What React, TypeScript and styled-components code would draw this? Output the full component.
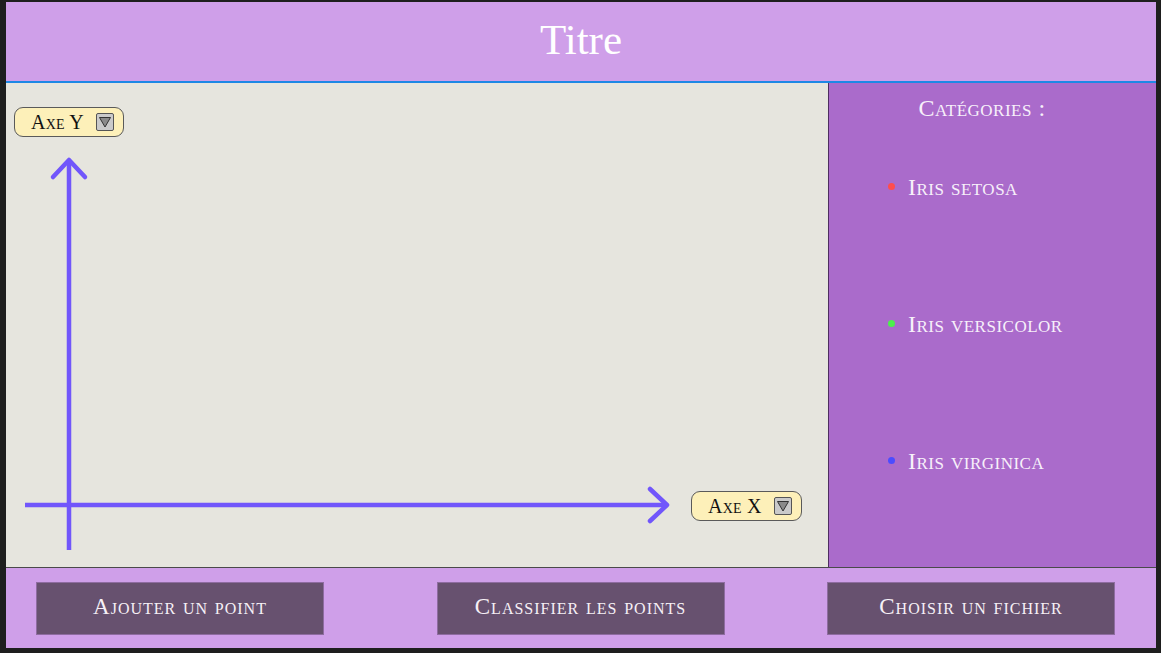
import React from "react";
import styled, { createGlobalStyle } from "styled-components";

const GlobalStyle = createGlobalStyle`
  html, body {
    margin: 0;
    padding: 0;
    background: #1e1e1e;
  }
  body {
    font-family: "Liberation Serif", "Times New Roman", serif;
  }
`;

const Frame = styled.div`
  margin: 2px 0 0 6px;
  width: 1150px;
  height: 646px;
  display: flex;
  flex-direction: column;
`;

const Header = styled.header`
  height: 79px;
  flex: 0 0 auto;
  background: #cf9fe9;
  border-bottom: 2px solid #1e88e5;
  display: flex;
  align-items: center;
  justify-content: center;
`;

const Title = styled.h1`
  margin: 0 0 4px 0;
  font-family: "Liberation Serif", serif;
  font-weight: 400;
  font-size: 43px;
  line-height: 1;
  color: #ffffff;
`;

const Main = styled.main`
  flex: 1 1 auto;
  display: flex;
  min-height: 0;
`;

const Graph = styled.section`
  flex: 1 1 auto;
  position: relative;
  background: #e6e5de;
`;

const Axes = styled.svg`
  position: absolute;
  left: 0;
  top: 0;
`;

const AxisSelect = styled.div<{ $x: number; $y: number; $w: number; $h: number }>`
  position: absolute;
  left: ${(p) => p.$x}px;
  top: ${(p) => p.$y}px;
  width: ${(p) => p.$w}px;
  height: ${(p) => p.$h}px;
  box-sizing: border-box;
  background: #fdf0b9;
  border: 1px solid #5a5a5a;
  border-radius: 9px;
  display: flex;
  align-items: center;
  padding-left: 16px;
  gap: 12px;
`;

const AxisLabel = styled.span`
  font-family: "Liberation Serif", serif;
  font-variant: small-caps;
  font-size: 20px;
  letter-spacing: 0.2px;
  color: #111;
  line-height: 1;
`;

const DropButton = styled.span`
  width: 18px;
  height: 18px;
  box-sizing: border-box;
  background: #cacaca;
  border: 1px solid #555;
  border-radius: 2px;
  display: flex;
  align-items: center;
  justify-content: center;
`;

const Sidebar = styled.aside`
  flex: 0 0 328px;
  box-sizing: border-box;
  background: #aa6bcb;
  border-left: 1px solid #4e2d60;
  display: flex;
  flex-direction: column;
`;

const SideHeading = styled.h2`
  margin: 10px 0 0 0;
  padding-right: 21px;
  height: 30px;
  line-height: 30px;
  text-align: center;
  font-family: "Liberation Serif", serif;
  font-weight: 400;
  font-variant: small-caps;
  font-size: 24px;
  letter-spacing: 0.5px;
  color: #f7f0fa;
`;

const CategoryList = styled.ul`
  list-style: none;
  margin: 49px 0 0 0;
  padding: 0 0 0 59px;
  display: flex;
  flex-direction: column;
  gap: 107px;
`;

const Category = styled.li`
  height: 30px;
  display: flex;
  align-items: center;
  gap: 13px;
  font-family: "Liberation Serif", serif;
  font-variant: small-caps;
  font-size: 24px;
  letter-spacing: 0.5px;
  color: #f7f0fa;
`;

const Dot = styled.span<{ $color: string }>`
  width: 7px;
  height: 7px;
  border-radius: 50%;
  background: ${(p) => p.$color};
  flex: 0 0 auto;
  margin-bottom: 2px;
`;

const Footer = styled.footer`
  height: 80px;
  flex: 0 0 auto;
  background: #cf9fe9;
  border-top: 1px solid #4a4a4a;
  display: flex;
  align-items: center;
  justify-content: space-between;
  padding: 0 41px 0 30px;
`;

const ActionButton = styled.button<{ $shift?: number }>`
  width: 288px;
  height: 53px;
  margin-left: ${(p) => p.$shift ?? 0}px;
  box-sizing: border-box;
  background: #67516f;
  border: 1px solid #8e6ca0;
  color: #f6f0f6;
  font-family: "Liberation Serif", serif;
  font-variant: small-caps;
  font-size: 23px;
  letter-spacing: 1px;
  padding: 0 0 3px 0;
  cursor: pointer;
`;

const Caret = () => (
  <svg width="14" height="14" viewBox="0 0 14 14">
    <polygon points="1.5,2.5 12.5,2.5 7,12" fill="#8a8a8a" stroke="#333" strokeWidth="1" strokeLinejoin="round" />
  </svg>
);

const categories = [
  { name: "Iris setosa", color: "#ff4d4d" },
  { name: "Iris versicolor", color: "#4cf04c" },
  { name: "Iris virginica", color: "#4c4cff" },
];

export default function App() {
  const axis = "#7156fb";
  return (
    <>
      <GlobalStyle />
      <Frame>
        <Header>
          <Title>Titre</Title>
        </Header>
        <Main>
          <Graph>
            <Axes width="822" height="484" viewBox="0 0 822 484">
              <line x1="63" y1="78" x2="63" y2="467" stroke={axis} strokeWidth="4.5" />
              <polyline points="47,94 63,77 79,94" fill="none" stroke={axis} strokeWidth="4.5" strokeLinecap="round" strokeLinejoin="round" />
              <line x1="19" y1="422" x2="660" y2="422" stroke={axis} strokeWidth="4.5" />
              <polyline points="644,406 661,422 644,438" fill="none" stroke={axis} strokeWidth="4.5" strokeLinecap="round" strokeLinejoin="round" />
            </Axes>
            <AxisSelect $x={8} $y={24} $w={110} $h={30}>
              <AxisLabel>Axe Y</AxisLabel>
              <DropButton>
                <Caret />
              </DropButton>
            </AxisSelect>
            <AxisSelect $x={685} $y={408} $w={111} $h={30}>
              <AxisLabel>Axe X</AxisLabel>
              <DropButton>
                <Caret />
              </DropButton>
            </AxisSelect>
          </Graph>
          <Sidebar>
            <SideHeading>Catégories :</SideHeading>
            <CategoryList>
              {categories.map((c) => (
                <Category key={c.name}>
                  <Dot $color={c.color} />
                  {c.name}
                </Category>
              ))}
            </CategoryList>
          </Sidebar>
        </Main>
        <Footer>
          <ActionButton>Ajouter un point</ActionButton>
          <ActionButton $shift={10}>Classifier les points</ActionButton>
          <ActionButton>Choisir un fichier</ActionButton>
        </Footer>
      </Frame>
    </>
  );
}
